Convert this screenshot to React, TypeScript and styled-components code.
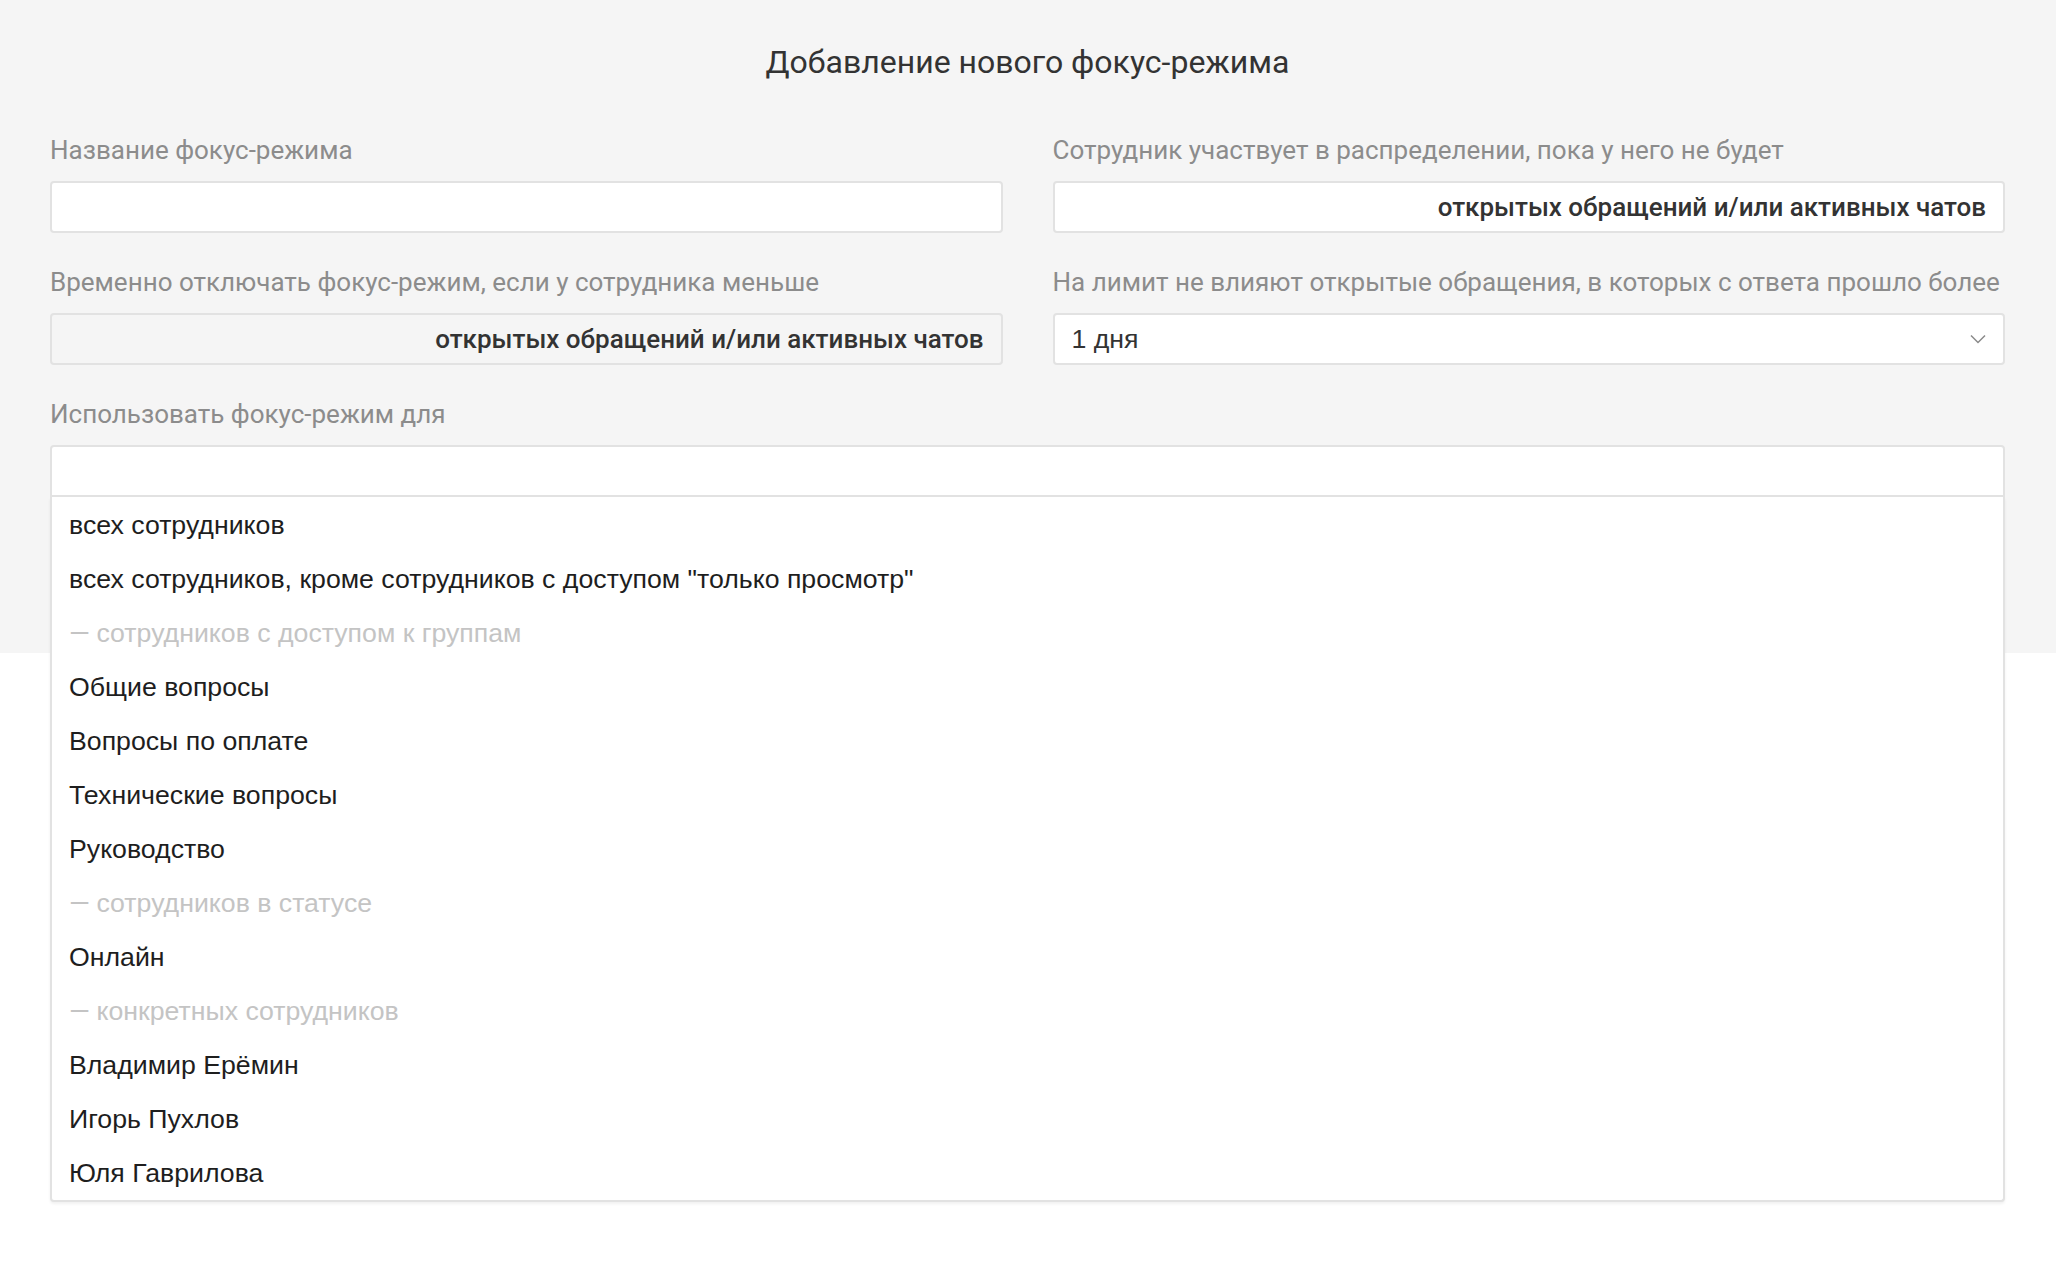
import * as React from "react";
import styled, { createGlobalStyle } from "styled-components";

const GlobalStyle = createGlobalStyle`
  html, body {
    margin: 0;
    padding: 0;
    background: #ffffff;
  }
  body {
    font-family: Roboto, "Noto Sans", Arial, sans-serif;
  }
`;

const Page = styled.div`
  min-height: 100vh;
  background: #ffffff;
`;

const Panel = styled.section`
  box-sizing: border-box;
  height: 653px;
  padding: 44px 51px 0 50px;
  background: #f5f5f5;
`;

const Title = styled.h1`
  margin: 0 0 58px;
  font-size: 32px;
  line-height: 36px;
  font-weight: 400;
  color: #333333;
  text-align: center;
`;

const Grid = styled.div`
  display: grid;
  grid-template-columns: 1fr 1fr;
  column-gap: 50px;
  row-gap: 37px;
`;

const Field = styled.div<{ $wide?: boolean }>`
  position: relative;
  grid-column: ${(p) => (p.$wide ? "1 / -1" : "auto")};
`;

const Label = styled.label`
  display: block;
  margin-bottom: 18px;
  font-size: 26px;
  line-height: 25px;
  color: #8c8c8c;
  white-space: nowrap;
`;

const Box = styled.div<{ $disabled?: boolean; $open?: boolean }>`
  box-sizing: border-box;
  display: flex;
  align-items: center;
  justify-content: flex-end;
  height: 52px;
  padding: 0 17px;
  border: 2px solid #e2e2e2;
  border-radius: ${(p) => (p.$open ? "4px 4px 0 0" : "4px")};
  background: ${(p) => (p.$disabled ? "#f5f5f5" : "#ffffff")};
`;

const Unit = styled.span`
  font-size: 26px;
  font-weight: 500;
  color: #333333;
`;

const Select = styled(Box)`
  justify-content: space-between;
`;

const SelectValue = styled.span`
  font-family: "Liberation Sans", Arial, sans-serif;
  font-size: 26.7px;
  color: #333333;
`;

const Menu = styled.ul`
  position: absolute;
  top: 100%;
  left: 0;
  right: 0;
  margin: 0;
  padding: 1px 0 0;
  list-style: none;
  background: #ffffff;
  border: 2px solid #e2e2e2;
  border-top: none;
  border-radius: 0 0 4px 4px;
  box-shadow: 0 2px 3px rgba(0, 0, 0, 0.06);
  z-index: 2;
`;

const Option = styled.li<{ $group?: boolean }>`
  height: 54px;
  padding: 0 17px;
  font-family: "Liberation Sans", Arial, sans-serif;
  font-size: 26.7px;
  line-height: 54px;
  color: ${(p) => (p.$group ? "#c4c4c4" : "#1e1e1e")};
  white-space: nowrap;
`;

const Dash = styled.span`
  font-family: Roboto, sans-serif;
`;

const Chevron = () => (
  <svg width="16" height="10" viewBox="0 0 16 10" fill="none">
    <path d="M1 1.5 8 8.5 15 1.5" stroke="#8a8a8a" strokeWidth="1.5" />
  </svg>
);

const options: { text: string; group?: boolean }[] = [
  { text: "всех сотрудников" },
  { text: "всех сотрудников, кроме сотрудников с доступом \"только просмотр\"" },
  { text: "сотрудников с доступом к группам", group: true },
  { text: "Общие вопросы" },
  { text: "Вопросы по оплате" },
  { text: "Технические вопросы" },
  { text: "Руководство" },
  { text: "сотрудников в статусе", group: true },
  { text: "Онлайн" },
  { text: "конкретных сотрудников", group: true },
  { text: "Владимир Ерёмин" },
  { text: "Игорь Пухлов" },
  { text: "Юля Гаврилова" },
];

const App: React.FC = () => {
  return (
    <Page>
      <GlobalStyle />
      <Panel>
        <Title>Добавление нового фокус-режима</Title>
        <Grid>
          <Field>
            <Label>Название фокус-режима</Label>
            <Box />
          </Field>
          <Field>
            <Label>Сотрудник участвует в распределении, пока у него не будет</Label>
            <Box>
              <Unit>открытых обращений и/или активных чатов</Unit>
            </Box>
          </Field>
          <Field>
            <Label>Временно отключать фокус-режим, если у сотрудника меньше</Label>
            <Box $disabled>
              <Unit>открытых обращений и/или активных чатов</Unit>
            </Box>
          </Field>
          <Field>
            <Label>На лимит не влияют открытые обращения, в которых с ответа прошло более</Label>
            <Select>
              <SelectValue>1 дня</SelectValue>
              <Chevron />
            </Select>
          </Field>
          <Field $wide>
            <Label>Использовать фокус-режим для</Label>
            <Box $open />
            <Menu>
              {options.map((o) => (
                <Option key={o.text} $group={o.group}>
                  {o.group && <Dash>— </Dash>}
                  {o.text}
                </Option>
              ))}
            </Menu>
          </Field>
        </Grid>
      </Panel>
    </Page>
  );
};

export default App;
